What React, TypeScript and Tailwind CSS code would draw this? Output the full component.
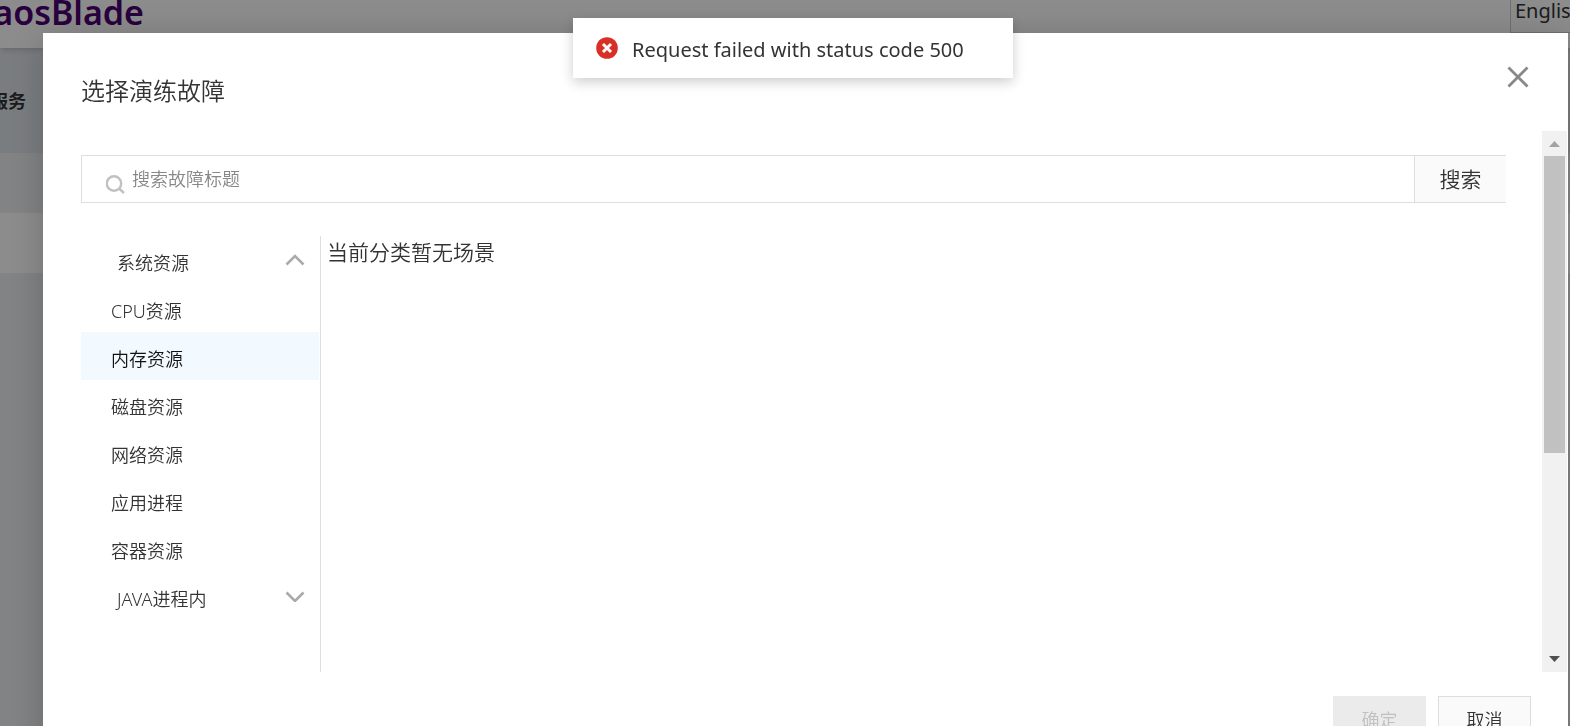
import { useState } from "react";

const groups = [
  {
    name: "系统资源",
    items: ["CPU资源", "内存资源", "磁盘资源", "网络资源", "应用进程", "容器资源"],
  },
  { name: "JAVA进程内", items: [] as string[] },
];

function Chevron({ open }: { open: boolean }) {
  return (
    <svg width="20" height="12" viewBox="0 0 20 12" fill="none" stroke="#aaa" strokeWidth="2.6">
      <path d={open ? "M1.5 10.5 10 2l8.5 8.5" : "M1.5 2.5 10 11l8.5-8.5"} />
    </svg>
  );
}

function Backdrop() {
  return (
    <div className="h-screen overflow-hidden bg-[#ebeef0]">
      <header className="relative flex h-12 items-start justify-between bg-white shadow-md">
        <div className="-mt-2 flex w-36 justify-end overflow-hidden font-['Noto_Sans'] text-[34px] leading-10 font-semibold text-[#4b0071]">
          ChaosBlade
        </div>
        <div className="h-[33px] w-[60px] overflow-hidden border-b border-l border-[#ccc] pl-1 text-xl leading-[22px] font-normal text-[#333]">
          English
        </div>
      </header>
      <div className="flex h-[105px] items-center bg-[#dfe4e9]">
        <div className="flex w-[26px] justify-end overflow-hidden text-lg font-bold whitespace-nowrap text-[#333]">
          应用服务
        </div>
      </div>
      <div className="h-[60px] bg-[#ebeef0]" />
      <div className="h-[60px] bg-white" />
    </div>
  );
}

function ScrollBar() {
  return (
    <div className="mr-px flex w-[25px] shrink-0 flex-col items-center bg-[#f1f1f1]">
      <svg width="25" height="25" viewBox="0 0 25 25" fill="#a3a3a3">
        <path d="M7 16 12.5 10 18 16z" />
      </svg>
      <div className="h-[297px] w-[21px] bg-[#c1c1c1]" />
      <svg className="mt-auto" width="25" height="25" viewBox="0 0 25 25" fill="#505050">
        <path d="M7 9 12.5 15 18 9z" />
      </svg>
    </div>
  );
}

function Toast() {
  return (
    <div className="fixed inset-x-0 top-[18px] flex justify-center pl-4">
      <div
        role="alert"
        className="flex h-[60px] w-[440px] items-center gap-3.5 bg-white px-[23px] shadow-[0_4px_12px_rgba(0,0,0,0.2)]"
      >
        <svg width="22" height="22" viewBox="0 0 22 22" fill="none">
          <circle cx="11" cy="11" r="10.8" fill="#d93026" />
          <path d="m7 7 8 8M15 7l-8 8" stroke="#fff" strokeWidth="3" />
        </svg>
        <span className="pt-1 font-['Noto_Sans'] text-xl font-normal whitespace-nowrap text-[#333]">
          Request failed with status code 500
        </span>
      </div>
    </div>
  );
}

export default function App() {
  const [selected, setSelected] = useState("内存资源");
  const [open, setOpen] = useState("系统资源");
  const [keyword, setKeyword] = useState("");

  return (
    <div className="font-['Noto_Sans','Noto_Sans_CJK_SC',sans-serif] font-[350] text-[#333]">
      <Backdrop />

      <div className="fixed inset-0 flex items-start overflow-hidden bg-black/45 pt-[33px] pr-0.5 pl-[43px]">
        <div
          role="dialog"
          aria-labelledby="dialog-title"
          className="min-w-0 flex-1 bg-white pb-6 shadow-[0_4px_36px_rgba(0,0,0,0.2)]"
        >
          <div className="flex h-[98px] items-start justify-between pt-[30px] pr-9 pl-[38px]">
            <h2 id="dialog-title" className="pt-2.5 text-2xl leading-9">
              选择演练故障
            </h2>
            <button aria-label="关闭" className="p-0.5">
              <svg width="24" height="24" viewBox="0 0 24 24" stroke="#888" strokeWidth="2.8">
                <path d="m2.5 2.5 19 19M21.5 2.5l-19 19" />
              </svg>
            </button>
          </div>

          <div className="flex h-[541px]">
            <div className="flex min-w-0 flex-1 flex-col pt-6 pr-9 pl-[38px]">
              <div className="flex h-12 shrink-0 border-y border-l border-[#dedede]">
                <label htmlFor="keyword" className="pt-[19px] pr-1.5 pl-6" aria-label="搜索故障标题">
                  <svg width="20" height="19" viewBox="0 0 20 19" fill="none" stroke="#c1c1c1" strokeWidth="2.4">
                    <circle cx="8" cy="8.5" r="7.2" />
                    <path d="m13 13.5 5 4.5" />
                  </svg>
                </label>
                <input
                  id="keyword"
                  value={keyword}
                  onChange={(e) => setKeyword(e.target.value)}
                  placeholder="搜索故障标题"
                  className="min-w-0 flex-1 text-lg outline-none placeholder:text-[#888]"
                />
                <button className="w-[92px] border-l border-[#dedede] bg-[#fafafa] pt-0.5 text-[21px]">搜索</button>
              </div>

              <div className="mt-[33px] flex flex-1">
                <nav className="w-60 shrink-0 border-r border-[#dedede] pr-px">
                  {groups.map((g) => (
                    <div key={g.name}>
                      <button
                        onClick={() => setOpen(open === g.name ? "" : g.name)}
                        aria-expanded={open === g.name}
                        className="flex h-12 w-full items-center justify-between pr-3.5 pl-9 text-lg"
                      >
                        <span className="pt-1.5">{g.name}</span>
                        <Chevron open={open === g.name} />
                      </button>
                      {open === g.name &&
                        g.items.map((item) => (
                          <button
                            key={item}
                            onClick={() => setSelected(item)}
                            className={
                              "flex h-12 w-full items-center pt-1.5 pl-[30px] text-lg " +
                              (item === selected ? "bg-[#f2f9ff] text-[#111]" : "")
                            }
                          >
                            {item}
                          </button>
                        ))}
                    </div>
                  ))}
                </nav>
                <p className="pl-1.5 text-[21px] leading-8">当前分类暂无场景</p>
              </div>
            </div>
            <ScrollBar />
          </div>

          <div className="flex justify-end gap-3 pt-6 pr-[37px]">
            <button disabled className="h-12 w-[93px] bg-[#ebebeb] text-lg text-[#c1c1c1]">
              确定
            </button>
            <button className="h-12 w-[93px] border border-[#dedede] bg-[#fafafa] text-lg">取消</button>
          </div>
        </div>
      </div>

      <Toast />
    </div>
  );
}
